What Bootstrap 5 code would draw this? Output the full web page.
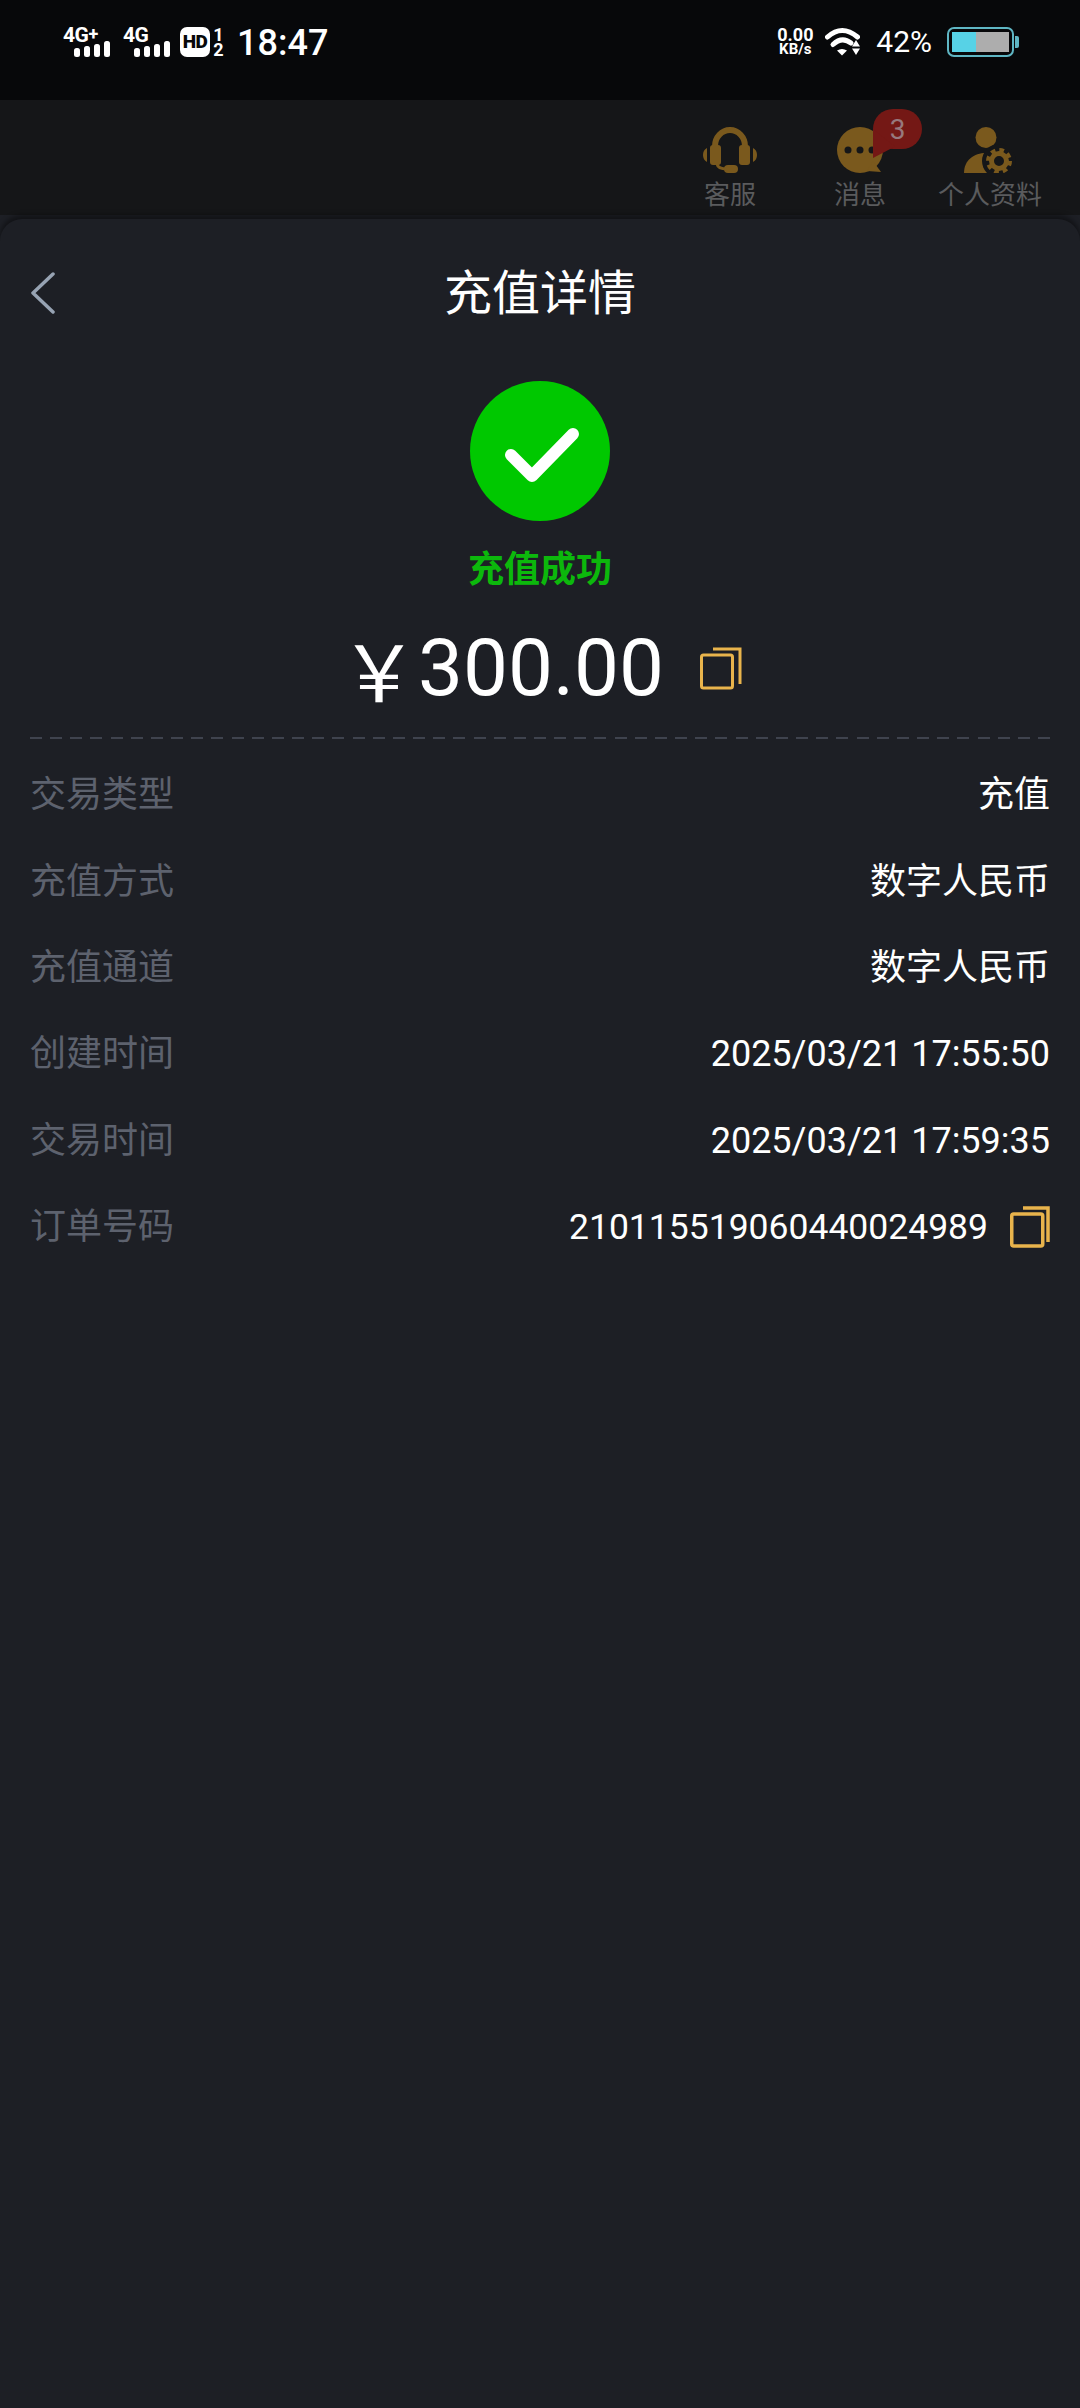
<!DOCTYPE html>
<html lang="zh-CN">
<head>
    <meta charset="UTF-8">
    <meta name="viewport" content="width=device-width, initial-scale=1.0">
    <title>充值详情</title>
    <link rel="stylesheet" href="https://cdn.jsdelivr.net/npm/bootstrap@5.3.0/dist/css/bootstrap.min.css">
    <style>
        html, body {
            height: 100%;
        }
        body {
            background: #1d1f25;
            color: #fff;
            font-family: Roboto, "Noto Sans CJK SC", sans-serif;
        }
        svg {
            display: block;
        }
        .phone {
            height: 2408px;
            overflow: hidden;
        }

        /* status bar */
        .status-bar {
            height: 100px;
            flex: none;
            padding: 27px 61px 0 63px;
            background: #07080a;
            align-items: flex-start;
        }
        .sig {
            width: 47px;
            margin-right: 13px;
        }
        .sig-name {
            font-size: 21px;
            font-weight: 700;
            line-height: 16px;
            height: 14px;
            letter-spacing: -0.5px;
        }
        .sig-name sup {
            font-size: 18px;
            top: -2px;
            line-height: 0;
        }
        .sig-bars {
            justify-content: flex-end;
            align-items: flex-end;
            gap: 4px;
            height: 16px;
        }
        .sig-bars i {
            display: block;
            width: 6px;
            background: #fff;
            border-radius: 2.5px;
        }
        .hd-box {
            width: 30px;
            height: 30px;
            margin-left: -3px;
            background: #fff;
            color: #07080a;
            border-radius: 7px;
            font-size: 19px;
            font-weight: 900;
            line-height: 30px;
            text-align: center;
            letter-spacing: -0.5px;
        }
        .hd-slot {
            width: 11px;
            margin-left: 3px;
            font-size: 18px;
            font-weight: 700;
            line-height: 15px;
            text-align: center;
        }
        .clock {
            margin-left: 13px;
            font-size: 36px;
            font-weight: 500;
            line-height: 32px;
        }
        .net-speed {
            width: 36px;
            text-align: center;
            font-weight: 700;
            font-size: 18px;
            line-height: 16px;
            margin-right: 12px;
        }
        .net-speed small {
            display: block;
            font-size: 15px;
            line-height: 13px;
            font-weight: 700;
        }
        .batt-pct {
            margin-left: 16px;
            font-size: 30px;
            line-height: 30px;
        }
        .batt {
            margin-left: 15px;
            width: 67px;
            height: 30px;
            border: 2px solid #5fb6c4;
            border-radius: 7px;
            padding: 3px;
        }
        .batt i {
            display: block;
            height: 100%;
        }
        .batt-on {
            width: 24px;
            background: #57d2e6;
        }
        .batt-off {
            flex: 1;
            background: #adadad;
        }
        .batt-tip {
            width: 4px;
            height: 12px;
            margin-top: 9px;
            margin-left: 1px;
            background: #5fb6c4;
            border-radius: 0 2px 2px 0;
        }

        /* dimmed page behind the sheet */
        .back-nav {
            height: 115px;
            flex: none;
            padding: 27px 25px 0 0;
            background: #151618;
            justify-content: flex-end;
        }
        .back-item {
            width: 130px;
            position: relative;
            color: #5a5b5d;
            font-size: 26px;
            line-height: 34px;
            text-align: center;
        }
        .back-item svg {
            margin: 0 auto 5px;
        }
        .msg-badge {
            position: absolute;
            left: 78px;
            top: -18px;
            width: 49px;
            height: 40px;
            background: #741815;
            border-radius: 20px;
            color: #97797d;
            font-size: 28px;
            line-height: 42px;
            text-align: center;
        }
        .msg-badge::before {
            content: "";
            position: absolute;
            left: 0;
            top: 20px;
            width: 22px;
            height: 29px;
            background: #741815;
            clip-path: polygon(0 0, 100% 60%, 0 100%);
        }

        /* sheet */
        .sheet {
            flex: 1;
            background: #1d1f25;
            border-radius: 22px 22px 0 0;
            box-shadow: 0 -4px 5px rgba(0, 0, 0, 0.4);
            margin-top: 4px;
            padding: 0 30px;
        }
        .sheet-top {
            display: grid;
            grid-template-columns: 1fr auto 1fr;
            align-items: center;
            height: 148px;
        }
        .sheet-title {
            font-size: 48px;
            line-height: 60px;
            padding-top: 2px;
        }
        .ok-circle {
            width: 140px;
            height: 140px;
            margin: 14px auto 0;
            background: #00c800;
            border-radius: 50%;
        }
        .ok-text {
            margin-top: 27px;
            color: #0cb80c;
            font-size: 36px;
            font-weight: 700;
            line-height: 44px;
            text-align: center;
        }
        .amount-row {
            margin-top: 26px;
            height: 100px;
            padding-left: 2px;
            justify-content: center;
            align-items: center;
        }
        .amount-cur {
            font-family: "Noto Sans CJK SC", sans-serif;
            font-size: 78px;
            line-height: 100px;
        }
        .amount-num {
            font-size: 80px;
            line-height: 100px;
        }
        .amount-copy {
            margin-left: 36px;
        }
        .dash-line {
            height: 2px;
            margin-top: 19px;
            background: repeating-linear-gradient(90deg, #3f434e 0 12px, transparent 12px 20.16px);
        }
        .info-list {
            margin-top: 13px;
        }
        .info-row {
            height: 86.4px;
            justify-content: space-between;
            align-items: center;
            font-size: 36px;
        }
        .info-label {
            color: #5d626e;
        }
        .order-no {
            font-size: 35.5px;
        }
        .order-copy {
            margin-left: 22px;
        }
    </style>
</head>
<body>
    <div class="phone d-flex flex-column">
        <div class="status-bar d-flex">
            <div class="sig">
                <div class="sig-name">4G<sup>+</sup></div>
                <div class="sig-bars d-flex"><i style="height: 9px"></i><i style="height: 11px"></i><i style="height: 13px"></i><i style="height: 16px"></i></div>
            </div>
            <div class="sig">
                <div class="sig-name">4G</div>
                <div class="sig-bars d-flex"><i style="height: 9px"></i><i style="height: 11px"></i><i style="height: 13px"></i><i style="height: 16px"></i></div>
            </div>
            <div class="hd-box">HD</div>
            <div class="hd-slot"><div>1</div><div>2</div></div>
            <div class="clock">18:47</div>
            <div class="ms-auto net-speed">0.00<small>KB/s</small></div>
            <svg width="35" height="29" viewBox="0 0 35 29" fill="none">
                <path d="M2.5 10Q17 -3 32.5 10" stroke="#fff" stroke-width="5" stroke-linecap="round"/>
                <path d="M8 17.5Q17 9 26 16" stroke="#fff" stroke-width="5" stroke-linecap="round"/>
                <path d="M12 23.5Q17 20.5 22 23.5L17 28.5Z" fill="#fff"/>
                <path d="M31 13L35 19.5H27ZM27 21.5H35L31 28Z" fill="#fff"/>
            </svg>
            <div class="batt-pct">42%</div>
            <div class="batt d-flex"><i class="batt-on"></i><i class="batt-off"></i></div>
            <div class="batt-tip"></div>
        </div>

        <div class="back-nav d-flex">
            <div class="back-item">
                <svg width="54" height="46" viewBox="0 0 54 46" fill="#7a591d">
                    <path d="M12 24V19A15 16 0 0 1 42 19V24" fill="none" stroke="#7a591d" stroke-width="6"/>
                    <rect x="7" y="18" width="11" height="20" rx="3"/>
                    <rect x="36" y="18" width="11" height="20" rx="3"/>
                    <path d="M4 21V35Q0 33 0 28T4 21ZM50 21V35Q54 33 54 28T50 21Z"/>
                    <path d="M14 37Q15 42 24 42" fill="none" stroke="#7a591d" stroke-width="3"/>
                    <rect x="21" y="38" width="14" height="8" rx="4"/>
                </svg>
                <div>客服</div>
            </div>
            <div class="back-item">
                <svg width="46" height="46" viewBox="0 0 46 46">
                    <circle cx="23" cy="23" r="23" fill="#7a591d"/>
                    <path d="M36 34L44 45L30 44Z" fill="#7a591d"/>
                    <circle cx="11" cy="23" r="3.5" fill="#151618"/>
                    <circle cx="23" cy="23" r="3.5" fill="#151618"/>
                    <circle cx="35" cy="23" r="3.5" fill="#151618"/>
                </svg>
                <div>消息</div>
                <span class="msg-badge">3</span>
            </div>
            <div class="back-item">
                <svg width="52" height="46" viewBox="0 0 52 46">
                    <circle cx="22" cy="10.500" r="10.500" fill="#7a591d"/>
                    <path d="M0 46C0 33 10 26 22 26S44 33 44 46Z" fill="#7a591d"/>
                    <circle cx="35" cy="34" r="17" fill="#151618"/>
                    <circle cx="35" cy="34" r="7.500" fill="none" stroke="#7a591d" stroke-width="5"/>
                    <circle cx="35" cy="34" r="11" fill="none" stroke="#7a591d" stroke-width="4" stroke-dasharray="4.640 4"/>
                </svg>
                <div>个人资料</div>
            </div>
        </div>

        <div class="sheet">
            <div class="sheet-top">
                <svg width="26" height="42" viewBox="0 0 26 42" fill="none">
                    <path d="M23 2L3 21L23 40" stroke="#97a3b3" stroke-width="3.500" stroke-linecap="round" stroke-linejoin="round"/>
                </svg>
                <div class="sheet-title">充值详情</div>
                <div></div>
            </div>

            <div class="ok-circle d-flex align-items-center justify-content-center">
                <svg width="140" height="140" viewBox="0 0 140 140" fill="none">
                    <path d="M41 74L62 95L103 53" stroke="#fff" stroke-width="12" stroke-linecap="round" stroke-linejoin="round"/>
                </svg>
            </div>
            <div class="ok-text">充值成功</div>

            <div class="amount-row d-flex">
                <span class="amount-cur">&#xFFE5;</span>
                <span class="amount-num">300.00</span>
                <svg class="amount-copy" width="42" height="44" viewBox="0 0 42 44" fill="none" stroke="#e9b44c" stroke-width="3">
                    <rect x="1.500" y="9" width="31" height="33" rx="2"/>
                    <path d="M13 3H40V38"/>
                </svg>
            </div>

            <div class="dash-line"></div>

            <div class="info-list">
                <div class="info-row d-flex"><span class="info-label">交易类型</span><span>充值</span></div>
                <div class="info-row d-flex"><span class="info-label">充值方式</span><span>数字人民币</span></div>
                <div class="info-row d-flex"><span class="info-label">充值通道</span><span>数字人民币</span></div>
                <div class="info-row d-flex"><span class="info-label">创建时间</span><span>2025/03/21 17:55:50</span></div>
                <div class="info-row d-flex"><span class="info-label">交易时间</span><span>2025/03/21 17:59:35</span></div>
                <div class="info-row d-flex">
                    <span class="info-label">订单号码</span>
                    <span class="d-flex align-items-center order-no">210115519060440024989
                        <svg class="order-copy" width="40" height="42" viewBox="0 0 40 42" fill="none" stroke="#e9b44c" stroke-width="3.500">
                            <rect x="1.750" y="8" width="31" height="32" rx="2"/>
                            <path d="M13 2H38V36"/>
                        </svg>
                    </span>
                </div>
            </div>
        </div>
    </div>
</body>
</html>
